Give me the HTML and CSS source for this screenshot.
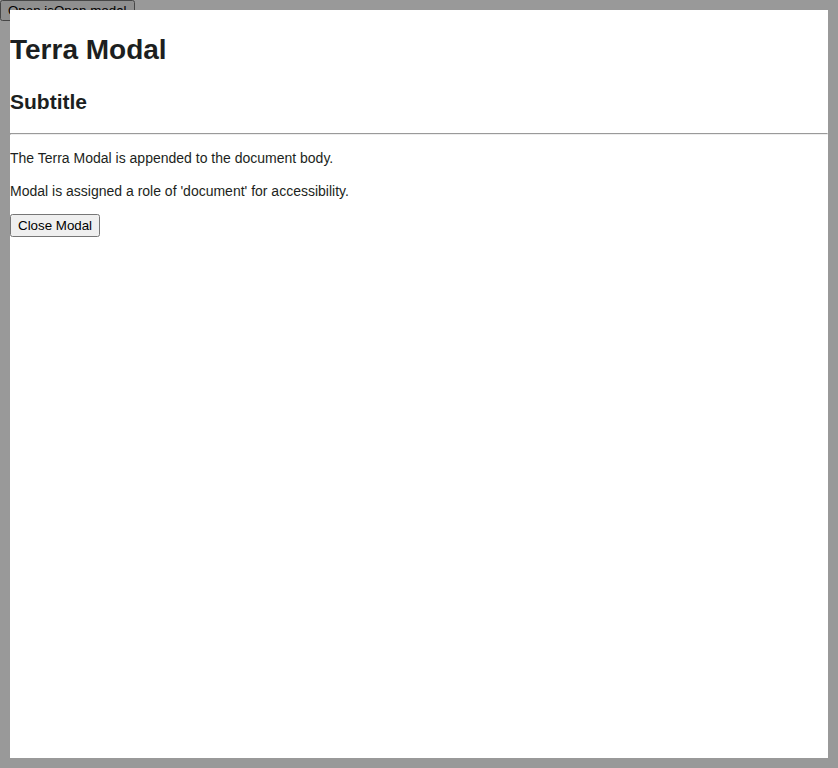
FILE: index.html
```html
<!DOCTYPE html>
<html>
<head>
<meta charset="utf-8">
<link rel="stylesheet" href="styles.css">
</head>
<body>
<button class="open-btn" type="button">Open isOpen modal</button>
<div class="overlay"></div>
<div class="modal" role="document">
  <h1 class="title">Terra Modal</h1>
  <h2 class="subtitle">Subtitle</h2>
  <hr class="divider">
  <p class="text">The Terra Modal is appended to the document body.</p>
  <p class="text text-last">Modal is assigned a role of 'document' for accessibility.</p>
  <button class="close-btn" type="button">Close Modal</button>
</div>
</body>
</html>
```
FILE: styles.css
```css
html, body {
  margin: 0;
  height: 100%;
}
body {
  font-family: "Liberation Sans", Arial, sans-serif;
  font-size: 14px;
  line-height: 1.36;
  color: #1c1f21;
  background: #fff;
}
.open-btn {
  font-family: "Liberation Sans", Arial, sans-serif;
  font-size: 13.333px;
}
.overlay {
  position: fixed;
  inset: 0;
  background: rgba(0, 0, 0, 0.4);
}
.modal {
  position: fixed;
  top: 10px;
  left: 10px;
  right: 10px;
  bottom: 10px;
  padding-top: 2px;
  background: #fff;
  overflow: auto;
}
.title {
  font-size: 28px;
  margin: 18.76px 0;
}
.subtitle {
  font-size: 21px;
  margin: 17.43px 0 17px;
}
.divider {
  margin: 7px 0 8px;
}
.text {
  margin: 14px 0;
}
.text-last {
  margin-bottom: 13px;
}
.close-btn {
  font-family: "Liberation Sans", Arial, sans-serif;
  font-size: 13.333px;
  color: #000;
  padding: 2px 6px;
}
```
